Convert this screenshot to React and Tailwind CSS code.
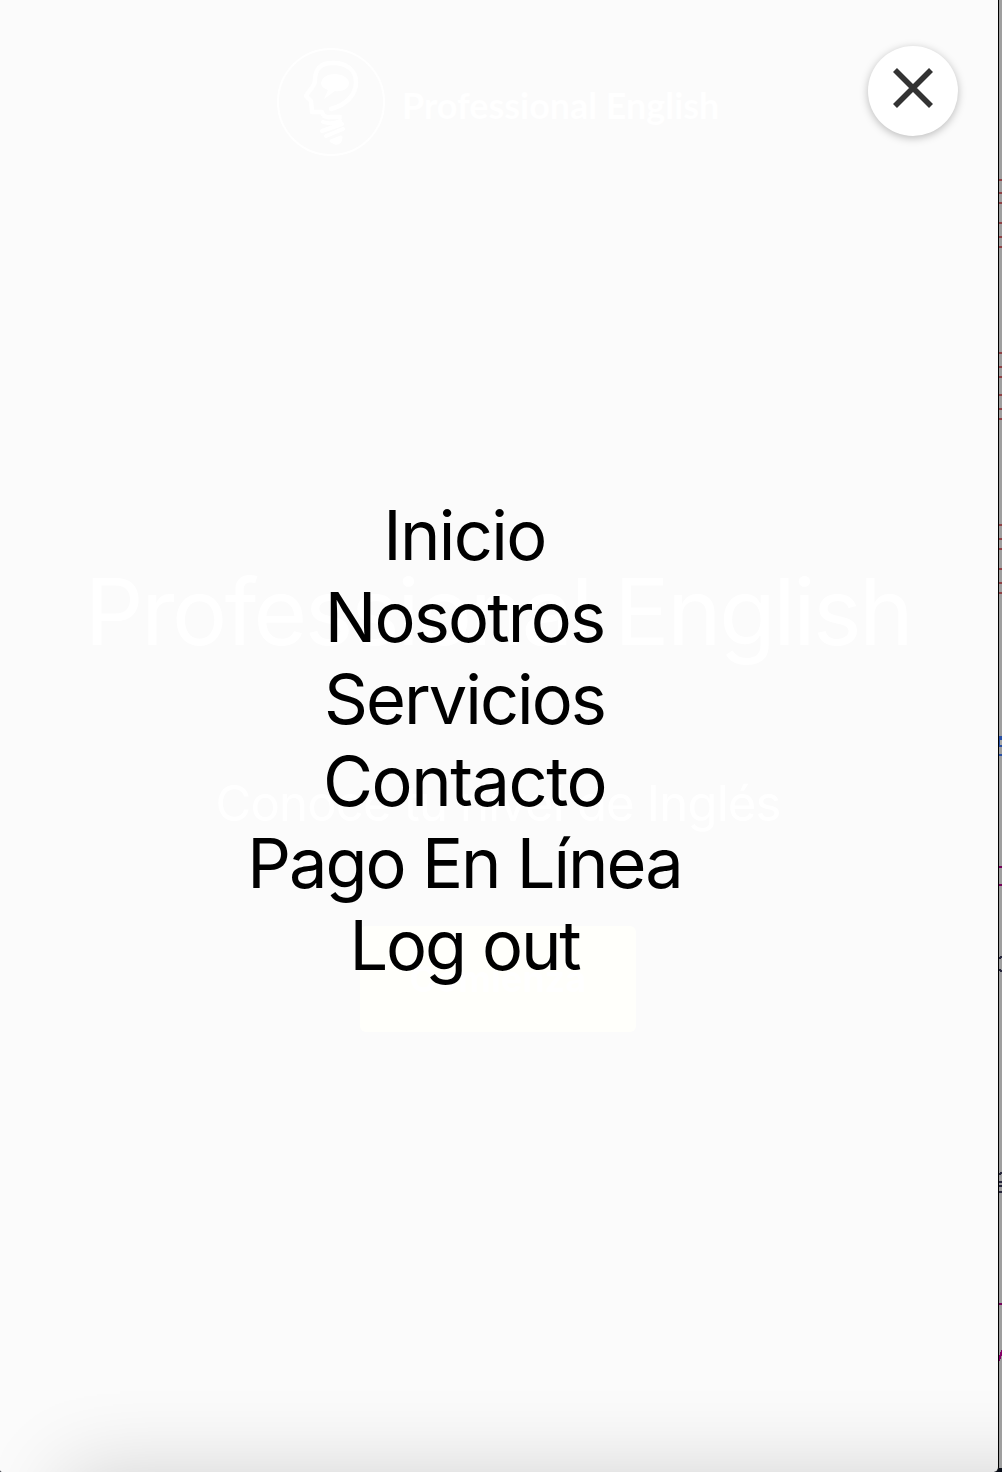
const links = [
  { label: 'Inicio', tracking: 'tracking-[-1.6px]' },
  { label: 'Nosotros', tracking: 'tracking-[-1.85px]' },
  { label: 'Servicios', tracking: 'tracking-[-2px]' },
  { label: 'Contacto', tracking: 'tracking-[-1.45px]' },
  { label: 'Pago En Línea', tracking: 'tracking-[-2px]' },
  { label: 'Log out', tracking: 'tracking-[-2.15px]' },
];

function Logo() {
  return (
    <svg className="h-[108px] w-[108px] shrink-0" viewBox="0 0 108 108" fill="none" stroke="#ffffff" strokeLinecap="round" strokeLinejoin="round">
      <circle cx="54" cy="54" r="53" strokeWidth="2" />
      <path d="M54 61C69 57 79 47 79 34C79 21 67 14 55 15C43 15 38 22 38 32C38 39 31 43 29 48L34 53L35 64H45Q46 70 54 69H63" strokeWidth="4.5" />
      <path d="M58 26C65 26 72 30 72 35C72 41 65 44 58 43L47 51L51 42C46 40 44 38 44 35C45 29 51 26 58 26Z" fill="#ffffff" stroke="none" />
      <path d="M46 74Q54 77 63 73M45 83L65 76M49 88L66 81" strokeWidth="4" />
      <path d="M54 93L64 89Q64 96 58 95Z" fill="#ffffff" strokeWidth="3" />
    </svg>
  );
}

function NeighbourWindow() {
  const red = [180, 193, 203, 223, 237, 247, 353, 367, 377, 395, 409, 419, 525, 539, 549, 569, 583, 593];
  return (
    <svg className="h-[1472px] w-[3px] shrink-0 bg-[#9f9f9f]" viewBox="0 0 3 1472" shapeRendering="crispEdges">
      {red.map((y) => <rect key={y} y={y - 1} width="3" height="2" fill="#8f4145" />)}
      <rect y="736" width="3" height="11" fill="#2850a5" />
      <rect x="1" y="740" width="2" height="5" fill="#aaaaaa" />
      <rect y="754" width="3" height="2" fill="#2850a5" />
      <path d="M0 867h3M0 885h3M0 1304h3" stroke="#75005a" strokeWidth="2" />
      <path d="M0 958l3-1M0 970l3 1M0 1174l3-1M0 1182h3M0 1186h3M0 1192h3" stroke="#25253a" strokeWidth="2" />
      <path d="M0 1361L3 1350" stroke="#850066" strokeWidth="2" />
      <rect y="1468" width="3" height="4" fill="#070b16" />
    </svg>
  );
}

export default function App() {
  return (
    <div className="flex h-[1472px] w-[1002px] overflow-hidden bg-[#070b16] font-['Inter',sans-serif]">
      <main className="relative w-[999px] shrink-0 overflow-hidden rounded-br-[5px] rounded-bl-[2px] border-r border-black bg-[#fbfbfb]">
        <header className="flex items-center gap-[17px] pt-12 pl-[277px]">
          <Logo />
          <span className="mt-1.5 font-['Lato',sans-serif] text-[36px] leading-none font-bold tracking-[-0.05px] whitespace-nowrap text-white">Professional English</span>
        </header>
        <section className="flex flex-col items-center pr-[2px] text-white">
          <h1 className="mt-[396px] text-[92px] leading-[120px] tracking-[-2.4px] whitespace-nowrap">Professional English</h1>
          <p className="mt-[102px] text-[49px] leading-[60px] tracking-[-0.8px] whitespace-nowrap">Conoce tu nivel de Inglés</p>
          <button className="mt-[92px] flex h-[106px] w-[276px] items-center justify-center rounded-[6px] bg-[#fffffb] text-[36px] font-bold">Comienza</button>
        </section>

        <nav className="absolute top-[495px] left-0 flex w-[929px] flex-col items-center text-[68.5px] leading-[82px] text-black">
          {links.map(({ label, tracking }) => (
            <a key={label} href="#" className={`whitespace-nowrap ${tracking}`}>{label}</a>
          ))}
        </nav>

        <button aria-label="Cerrar" className="absolute top-[46px] left-[868px] flex h-[90px] w-[90px] items-center justify-center rounded-full bg-white pb-[6px] shadow-[0_2px_8px_rgba(0,0,0,0.26)]">
          <svg className="h-10 w-10" viewBox="0 0 40 40" stroke="#333333" strokeWidth="5.6">
            <path d="M2 2L38 38M38 2L2 38" />
          </svg>
        </button>

        <div className="absolute top-full left-[64px] h-[300px] w-[1200px] shadow-[0_0_80px_rgba(0,0,0,0.165)]" />
      </main>
      <NeighbourWindow />
    </div>
  );
}
